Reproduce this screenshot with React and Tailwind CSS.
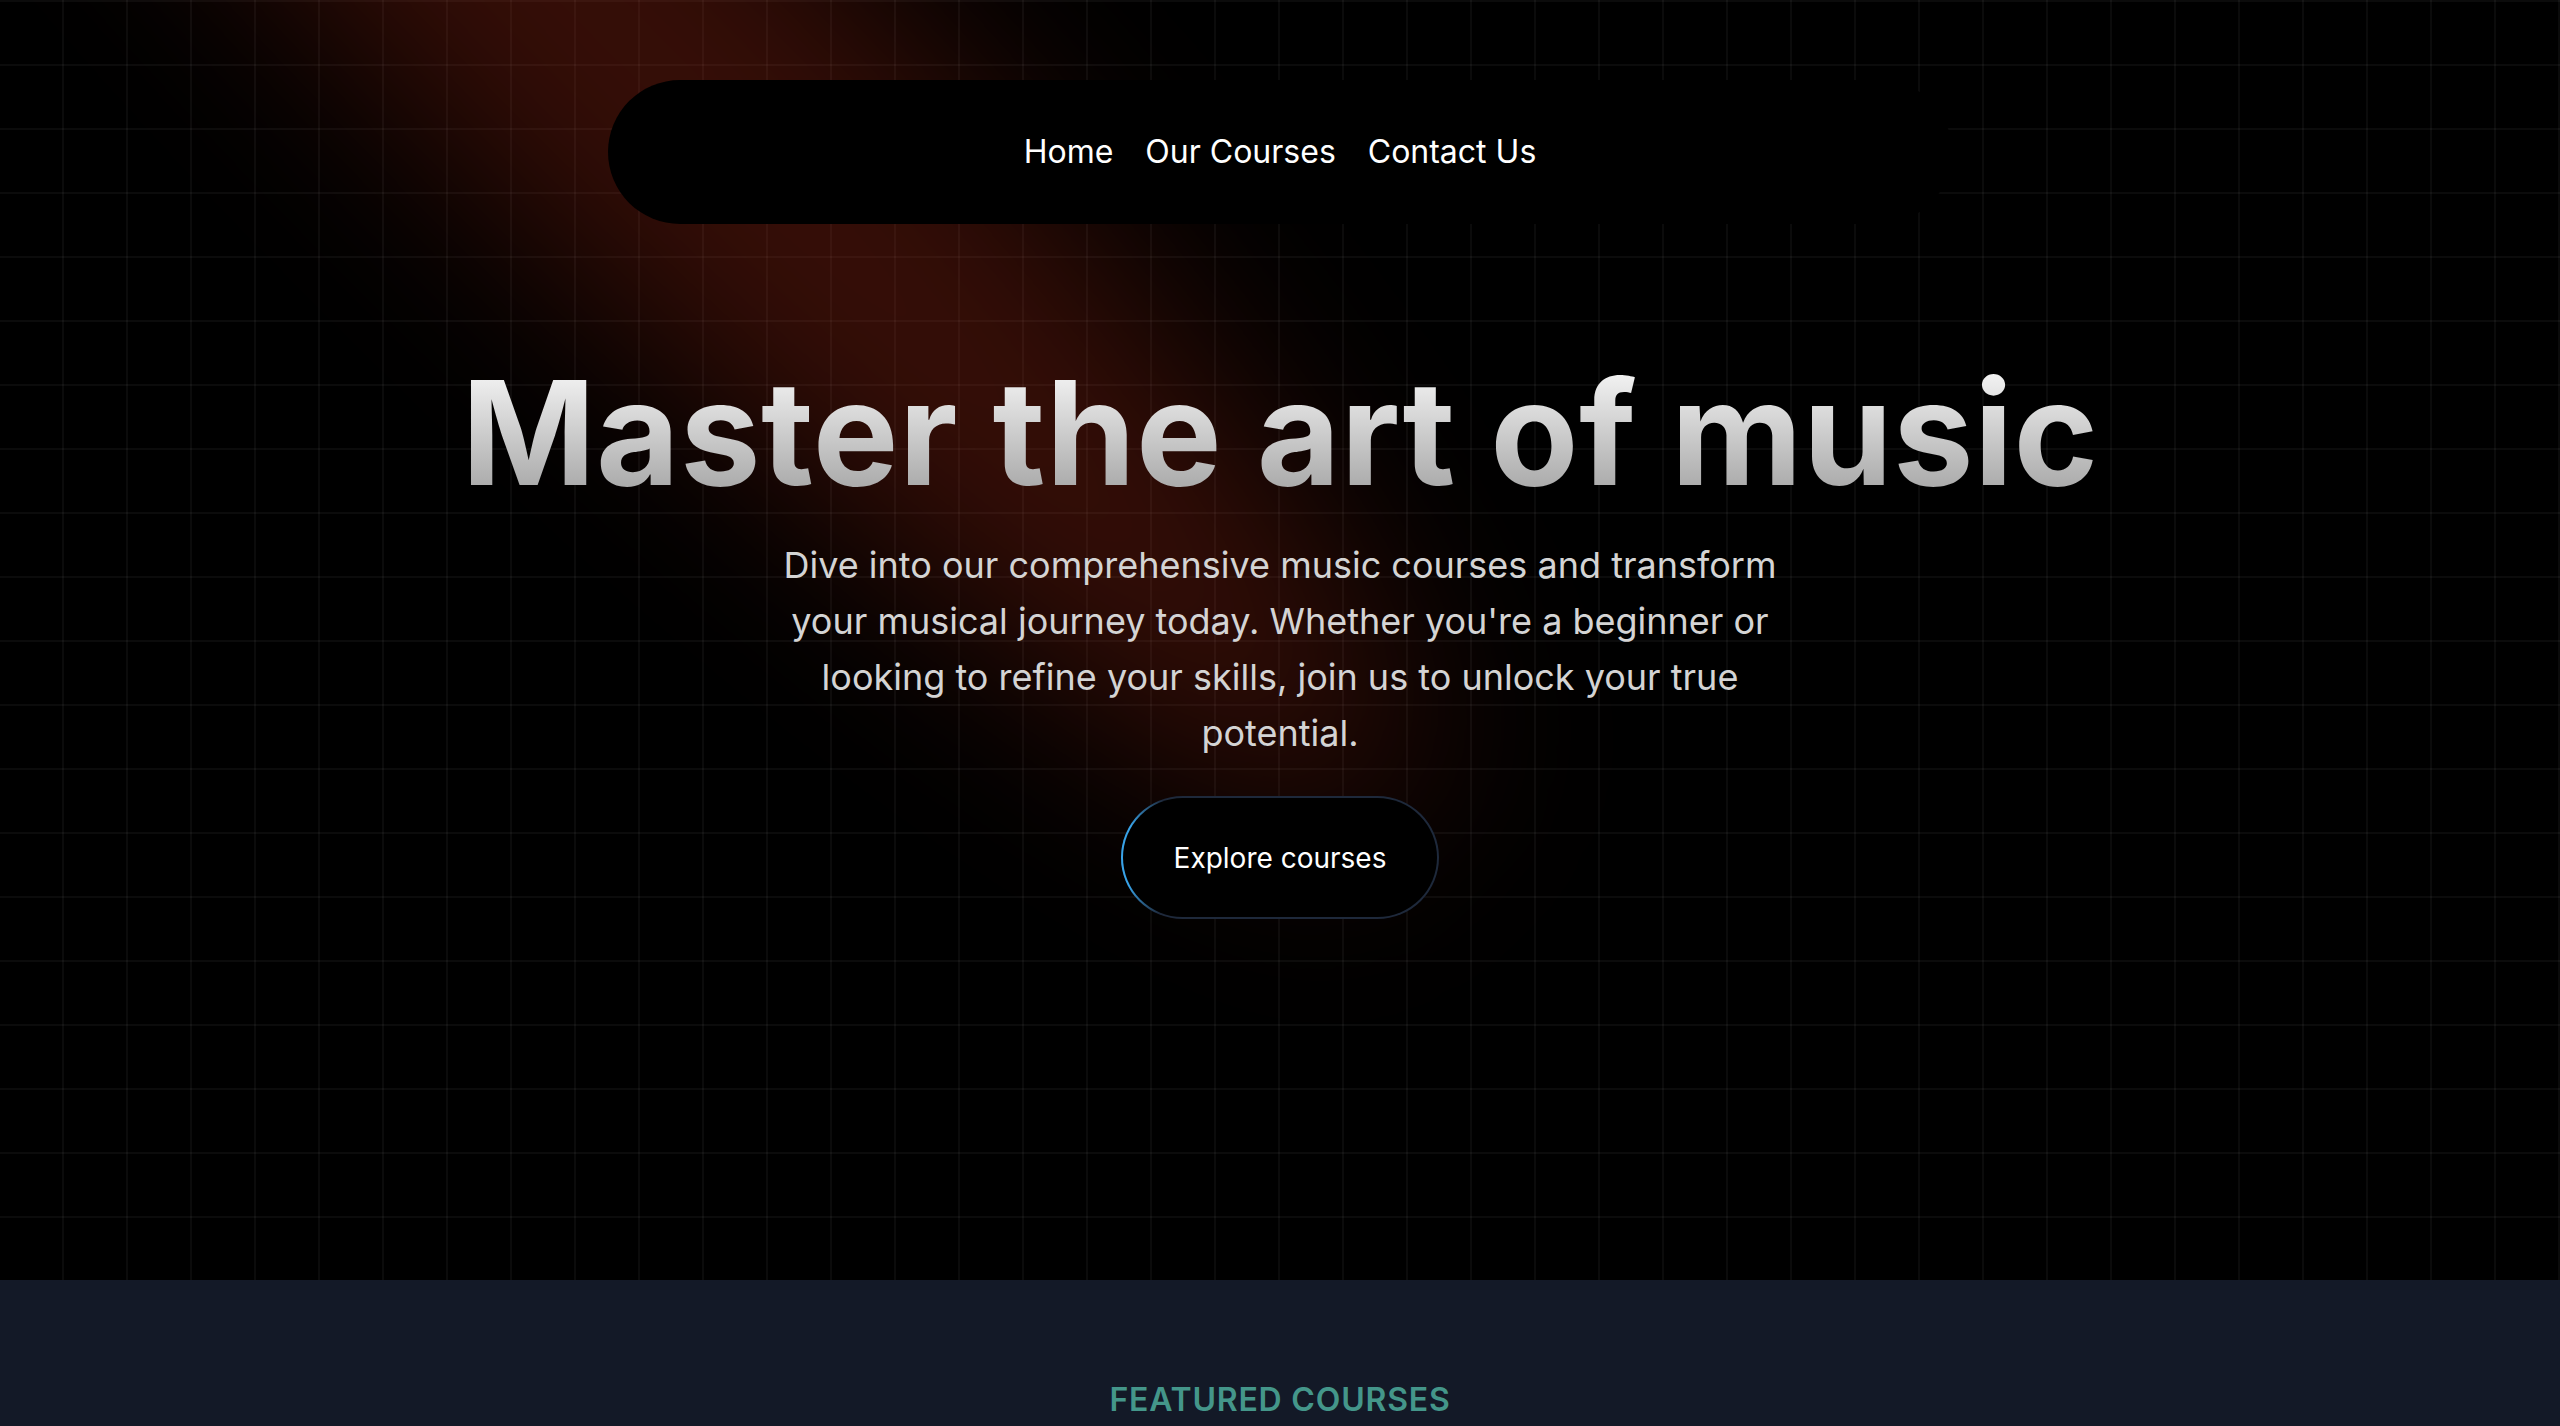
const navLinks = ['Home', 'Our Courses', 'Contact Us'];

export default function App() {
  return (
    <div className="min-h-screen bg-black font-['Inter','Noto_Sans',sans-serif] antialiased">
      {/* Floating navbar */}
      <div className="fixed inset-x-0 top-[80px] z-50 mx-auto max-w-[1344px]">
        <nav className="flex justify-center gap-[32px] rounded-full bg-black px-[64px] py-[48px]">
          {navLinks.map((link) => (
            <a key={link} href="#" className="text-[32px] leading-[48px] text-white">
              {link}
            </a>
          ))}
        </nav>
      </div>

      {/* Hero */}
      <section className="relative flex h-[1280px] w-full items-center justify-center overflow-hidden bg-black bg-[linear-gradient(to_right,transparent_62px,rgba(255,255,255,0.045)_62px),linear-gradient(to_bottom,rgba(255,255,255,0.045)_2px,transparent_2px)] bg-[size:64px_64px]">
        {/* Spotlight */}
        <div className="pointer-events-none absolute left-[-478px] top-[-168px] h-[400px] w-[2200px] rotate-[45deg] rounded-[50%] bg-[#d8361a]/25 blur-[100px]" />

        <div className="relative z-10 flex flex-col items-center">
          <h1 className="bg-linear-to-b from-neutral-50 to-neutral-400 bg-clip-text text-center text-[144px] font-bold leading-none tracking-[0.4px] text-transparent">
            Master the art of music
          </h1>
          <p className="mx-auto mt-[32px] max-w-[1024px] text-center text-[36px] leading-[56px] text-neutral-300">
            Dive into our comprehensive music courses and transform your musical journey today. Whether you're a beginner or looking to refine your skills, join us to unlock your true potential.
          </p>

          {/* Moving border button */}
          <div className="relative mt-[35px] h-[123px] w-[318px] overflow-hidden rounded-full bg-[#1e293b] p-[2px]">
            <div className="absolute left-[-60px] top-[-10px] h-[140px] w-[140px] bg-[radial-gradient(#38a3e8_30%,transparent_65%)]" />
            <button className="relative flex h-full w-full items-center justify-center rounded-full bg-black text-[28px] text-white">
              Explore courses
            </button>
          </div>
        </div>
      </section>

      {/* Featured courses */}
      <section className="bg-[#131927] py-[96px]">
        <h2 className="text-center text-[32px] font-semibold uppercase leading-[48px] tracking-wide text-[#44968a]">
          Featured Courses
        </h2>
      </section>
    </div>
  );
}
